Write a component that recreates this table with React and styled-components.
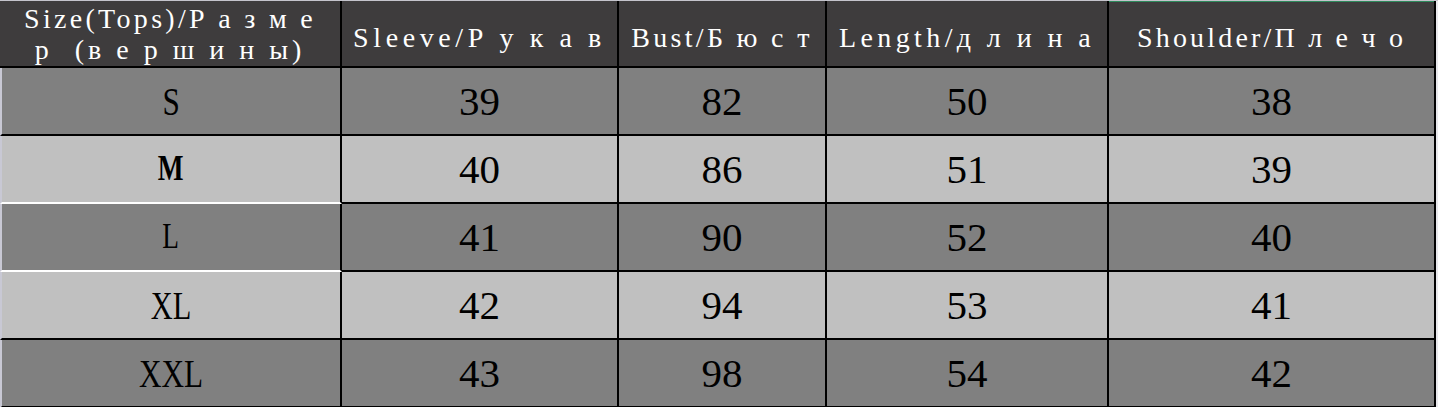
import styled, { createGlobalStyle } from "styled-components";

const GlobalStyle = createGlobalStyle`
  html, body {
    margin: 0;
    padding: 0;
    background: #ffffff;
  }
`;

// column widths taken from the sheet
const columns = [
  { key: "size", width: 342 },
  { key: "sleeve", width: 277, title: "Sleeve/Р у к а в", spacing: 4.6 },
  { key: "bust", width: 208, title: "Bust/Б ю с т", spacing: 3.3 },
  { key: "length", width: 282, title: "Length/д л и н а", spacing: 4.4 },
  { key: "shoulder", width: 327, title: "Shoulder/П л е ч о", spacing: 3.2 },
];

const rows = [
  { size: "S", fs: 40, values: [39, 82, 50, 38], tone: "dark", line: "#000" },
  { size: "M", fs: 35, values: [40, 86, 51, 39], tone: "light", line: "#fff", bold: true },
  { size: "L", fs: 35, values: [41, 90, 52, 40], tone: "dark", line: "#fff" },
  { size: "XL", fs: 39, values: [42, 94, 53, 41], tone: "light", line: "#000" },
  { size: "XXL", fs: 40, values: [43, 98, 54, 42], tone: "dark", line: "#000" },
];

export default function App() {
  return (
    <>
      <GlobalStyle />
      <Sheet>
        <Table>
          <HeadCell $first>
            <HeadText>
              <Line $spacing={3.3}>Size(Tops)/Р а з м е</Line>
              <Line $spacing={4}>р  (в е р ш и н ы)</Line>
            </HeadText>
          </HeadCell>
          {columns.slice(1).map((c) => (
            <HeadCell key={c.key} $green={c.key === "shoulder"}>
              <HeadText>
                <Line $spacing={c.spacing}>{c.title}</Line>
              </HeadText>
            </HeadCell>
          ))}

          {rows.map((r) => (
            <Row key={r.size}>
              <SizeCell $tone={r.tone} $line={r.line}>
                <SizeLabel $bold={r.bold} $fs={r.fs}>
                  {r.size}
                </SizeLabel>
              </SizeCell>
              {r.values.map((v, i) => (
                <Cell key={i} $tone={r.tone}>
                  {v}
                </Cell>
              ))}
            </Row>
          ))}
        </Table>
        <Edge />
      </Sheet>
    </>
  );
}

const Sheet = styled.div`
  display: flex;
  width: 1438px;
  height: 407px;
  overflow: hidden;
  border-top: 1px solid #c4c4cc;
  box-sizing: border-box;
`;

const Table = styled.div`
  display: grid;
  grid-template-columns: ${columns.map((c) => c.width + "px").join(" ")};
  grid-template-rows: 67px repeat(5, 68px);
`;

const Row = styled.div`
  display: contents;
`;

const Edge = styled.div`
  flex: 1;
  background: #e8e8ec;
`;

const HeadCell = styled.div`
  display: flex;
  align-items: center;
  justify-content: center;
  background: #3e3c3d;
  border-right: 2px solid #000;
  border-bottom: 2px solid #000;
  box-shadow: ${(p) => (p.$green ? "inset 0 1px 0 #2e8a5c" : "none")};
  padding-top: ${(p) => (p.$first ? "0" : "8px")};
  box-sizing: border-box;
`;

const HeadText = styled.div`
  display: flex;
  flex-direction: column;
  align-items: center;
  font-family: "Liberation Serif", "Times New Roman", serif;
  font-size: 28px;
  line-height: 31px;
  color: #ffffff;
`;

const Line = styled.span`
  letter-spacing: ${(p) => p.$spacing}px;
  white-space: pre;
`;

const tones = {
  dark: "#808080",
  light: "#c0c0c0",
};

const SizeCell = styled.div`
  display: flex;
  align-items: center;
  justify-content: center;
  background: ${(p) => tones[p.$tone]};
  border-left: 2px solid #c8c8d4;
  border-right: 2px solid #000;
  border-bottom: 2px solid ${(p) => p.$line};
  box-sizing: border-box;
`;

const SizeLabel = styled.span`
  display: inline-block;
  font-family: "Liberation Serif", "Times New Roman", serif;
  font-size: ${(p) => p.$fs}px;
  font-weight: ${(p) => (p.$bold ? 700 : 400)};
  color: #000;
  transform: scaleX(0.78);
`;

const Cell = styled.div`
  display: flex;
  align-items: center;
  justify-content: center;
  background: ${(p) => tones[p.$tone]};
  border-right: 2px solid #000;
  border-bottom: 2px solid #000;
  box-sizing: border-box;
  font-family: "Liberation Serif", "Times New Roman", serif;
  font-size: 41px;
  color: #000;
`;
